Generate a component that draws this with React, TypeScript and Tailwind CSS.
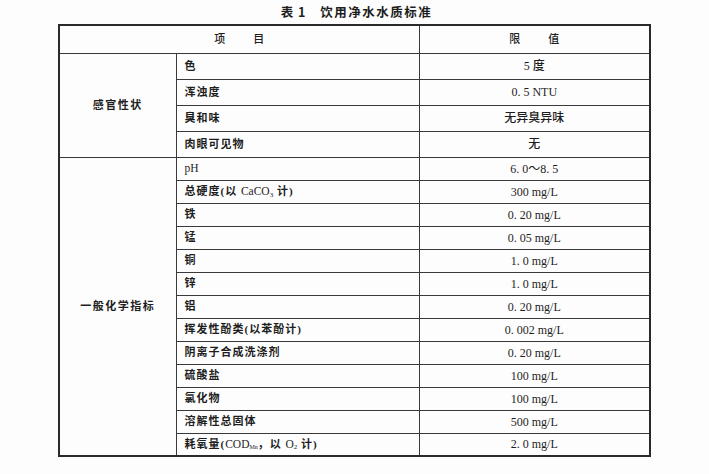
// water quality standard table (scanned look)
import type { FC, ReactNode } from "react";

// data
const Lat: FC<{ children: ReactNode }> = ({ children }) => (
  <span className="font-normal tracking-normal text-[11.5px]">{children}</span>
);

const senseRows: { name: ReactNode; value: ReactNode }[] = [
  { name: "色", value: "5 度" },
  { name: "浑浊度", value: "0. 5 NTU" },
  { name: "臭和味", value: "无异臭异味" },
  { name: "肉眼可见物", value: "无" },
];

const chemRows: { name: ReactNode; value: ReactNode }[] = [
  { name: <Lat>pH</Lat>, value: "6. 0～8. 5" },
  {
    name: (
      <>
        总硬度(以 <Lat>CaCO<sub className="text-[7px]">3</sub></Lat> 计)
      </>
    ),
    value: "300 mg/L",
  },
  { name: "铁", value: "0. 20 mg/L" },
  { name: "锰", value: "0. 05 mg/L" },
  { name: "铜", value: "1. 0 mg/L" },
  { name: "锌", value: "1. 0 mg/L" },
  { name: "铝", value: "0. 20 mg/L" },
  { name: "挥发性酚类(以苯酚计)", value: "0. 002 mg/L" },
  { name: "阴离子合成洗涤剂", value: "0. 20 mg/L" },
  { name: "硫酸盐", value: "100 mg/L" },
  { name: "氯化物", value: "100 mg/L" },
  { name: "溶解性总固体", value: "500 mg/L" },
  {
    name: (
      <>
        耗氧量(<Lat>COD<sub className="text-[6px]">Mn</sub></Lat>，以 <Lat>O<sub className="text-[7px]">2</sub></Lat> 计)
      </>
    ),
    value: "2. 0 mg/L",
  },
];

const cell = "border border-[#3a3a3a] px-2 align-middle";

// main
const App: FC = () => {
  return (
    <div className="w-[709px] h-[474px] bg-[#fdfdfd] text-[#1e1e1e] font-['Liberation_Serif','Noto_Sans_CJK_SC',serif]">
      {/* Title */}
      <div className="h-[24px] flex items-center justify-center pl-[4px] text-[12.5px] font-bold tracking-[1px] font-['Noto_Sans_CJK_SC',sans-serif]">
        <span>表 1</span>
        <span className="ml-[14px] tracking-[1.5px]">饮用净水水质标准</span>
      </div>

      {/* Table */}
      <div className="pl-[58px]">
        <table className="w-[591px] table-fixed border-collapse border-2 border-[#2a2a2a] text-[11px]">
          <colgroup>
            <col className="w-[117px]" />
            <col className="w-[243px]" />
            <col className="w-[231px]" />
          </colgroup>
          <tbody>
            <tr className="h-[28px]">
              <td colSpan={2} className={`${cell} text-center font-medium`}>
                项<span className="inline-block w-[28px]" />目
              </td>
              <td className={`${cell} text-center font-medium`}>
                限<span className="inline-block w-[28px]" />值
              </td>
            </tr>

            {senseRows.map((row, i) => (
              <tr key={`s${i}`} className="h-[26px]">
                {i === 0 && (
                  <td rowSpan={senseRows.length} className={`${cell} text-center tracking-[1.5px] font-semibold`}>
                    感官性状
                  </td>
                )}
                <td className={`${cell} tracking-[1px] font-semibold`}>{row.name}</td>
                <td className={`${cell} text-center text-[12px] font-medium`}>{row.value}</td>
              </tr>
            ))}

            {chemRows.map((row, i) => (
              <tr key={`c${i}`} className="h-[23px]">
                {i === 0 && (
                  <td rowSpan={chemRows.length} className={`${cell} text-center tracking-[1.5px] font-semibold`}>
                    一般化学指标
                  </td>
                )}
                <td className={`${cell} tracking-[1px] font-semibold`}>{row.name}</td>
                <td className={`${cell} text-center text-[12px]`}>{row.value}</td>
              </tr>
            ))}
          </tbody>
        </table>
      </div>
    </div>
  );
};

export default App;
